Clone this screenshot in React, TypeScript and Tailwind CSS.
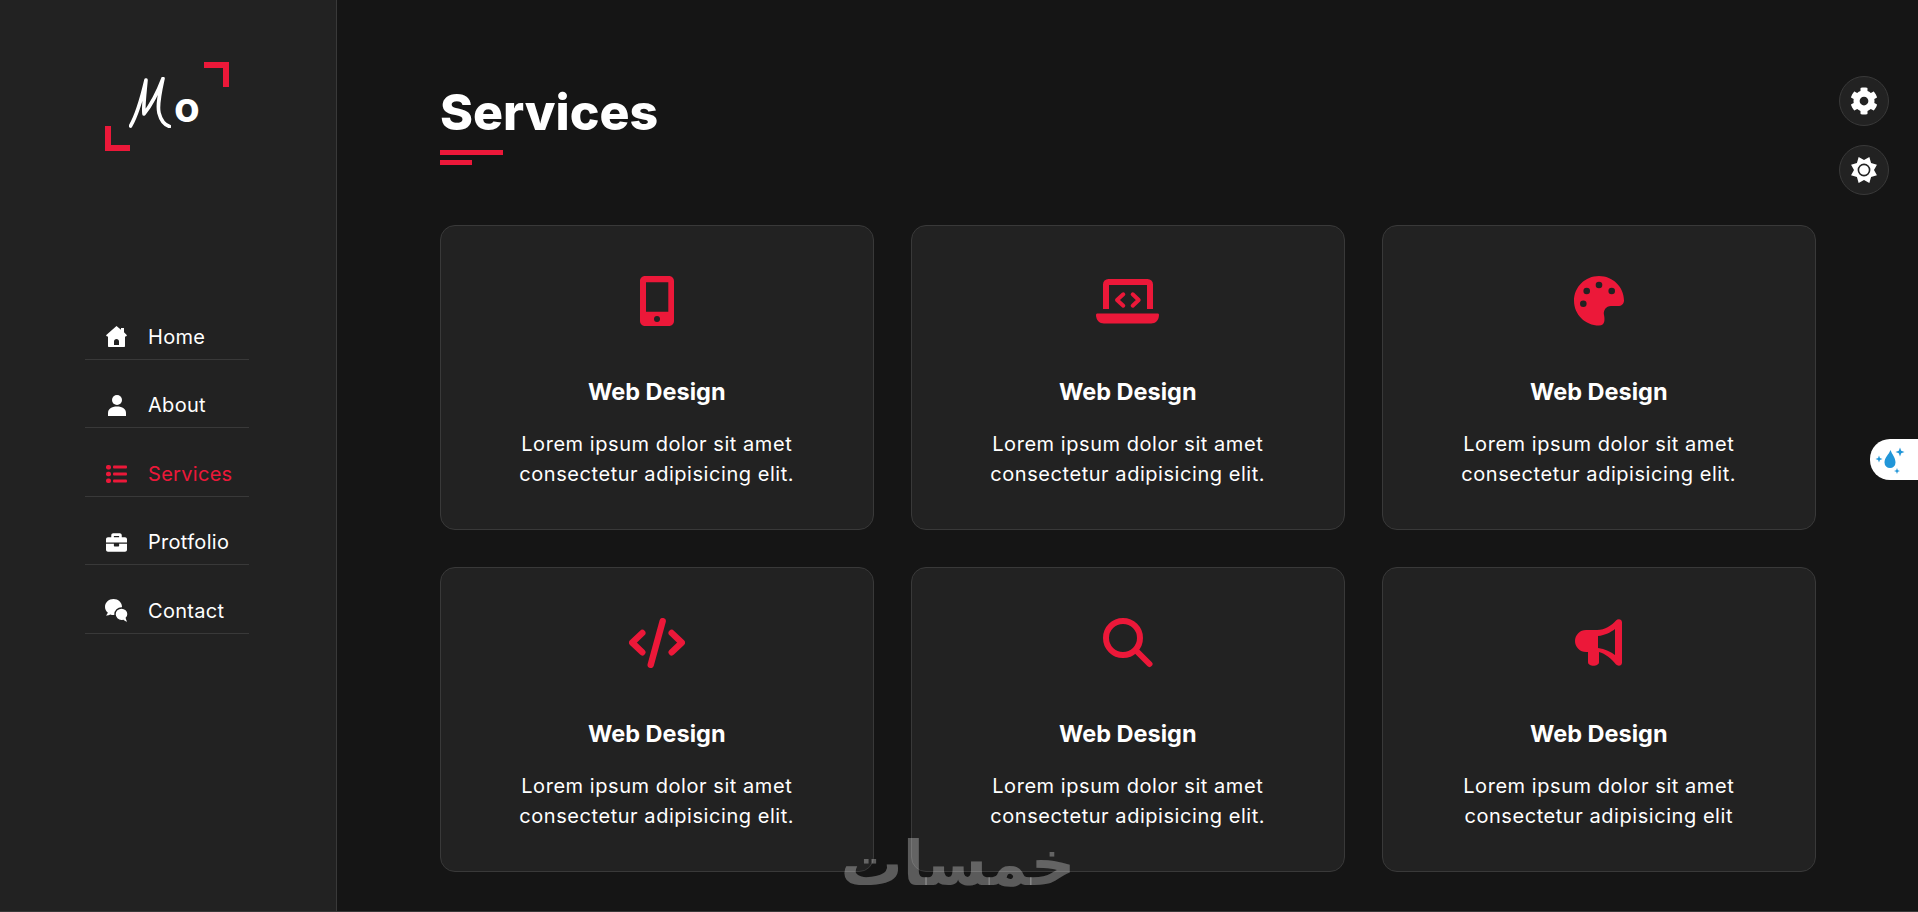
import { FaBriefcase, FaCog } from 'react-icons/fa';
import type { ReactNode } from 'react';

function HomeIcon() {
  return (
    <svg width="21" height="21" viewBox="0 0 21 21" fill="currentColor">
      <path
        fillRule="evenodd"
        d="M10.5 0L15 3.7V2H18V6.2L21 9.2L20 10.5H19V20C19 20.6 18.6 21 18 21H3C2.4 21 2 20.6 2 20V10.5H1L0 9.2ZM8 19H13V15.5C13 14 12 13 10.5 13C9 13 8 14 8 15.5Z"
      />
    </svg>
  );
}

function UserIcon() {
  return (
    <svg width="18" height="21" viewBox="0 0 18 21" fill="currentColor">
      <circle cx="9" cy="5" r="5" />
      <path d="M0 21V18C0 14 3.5 11.5 9 11.5C14.5 11.5 18 14 18 18V21Z" />
    </svg>
  );
}

function ListIcon() {
  return (
    <svg width="21" height="18" viewBox="0 0 21 18" fill="currentColor">
      <rect x="0" y="0" width="5" height="4.4" rx="2" />
      <rect x="0" y="6.8" width="5" height="4.4" rx="2" />
      <rect x="0" y="13.6" width="5" height="4.4" rx="2" />
      <rect x="7" y="0.6" width="14" height="3" rx="1" />
      <rect x="7" y="7.5" width="14" height="3" rx="1" />
      <rect x="7" y="14.4" width="14" height="3" rx="1" />
    </svg>
  );
}

function CommentsIcon() {
  return (
    <svg width="24" height="24" viewBox="0 0 24 24" fill="currentColor">
      <path d="M8.5 0C13.2 0 17 3.5 17 8C17 12.5 13.2 16 8.5 16C7.4 16 6.3 15.8 5.3 15.4C4 16.2 2.5 16.6 1 16.4C2 15.5 2.6 14.5 2.8 13.6C1 12.1 0 10.2 0 8C0 3.5 3.8 0 8.5 0Z" />
      <path
        d="M16.5 9C20 9 23 11.7 23 15C23 16.6 22.4 18 21.3 19C21.5 20.5 22.3 22 24 23.5C21.5 23.5 19.5 22.6 18.2 21.4C17.7 21.5 17.1 21.6 16.5 21.6C13 21.6 10 18.6 10 15.3C10 11.7 13 9 16.5 9Z"
        stroke="#222222"
        strokeWidth="1.4"
      />
    </svg>
  );
}

function PhoneIcon() {
  return (
    <svg width="34" height="50" viewBox="0 0 34 50" fill="currentColor">
      <path
        fillRule="evenodd"
        d="M5 0H29C31.8 0 34 2.2 34 5V45C34 47.8 31.8 50 29 50H5C2.2 50 0 47.8 0 45V5C0 2.2 2.2 0 5 0ZM6 6.3V35.7H28.3V6.3Z"
      />
      <circle cx="17" cy="43" r="3" fill="#222222" />
    </svg>
  );
}

function LaptopIcon() {
  return (
    <svg width="63" height="45" viewBox="0 0 63 45" fill="none" stroke="currentColor">
      <path d="M10 30V5.5C10 4 11 3 12.5 3H51.5C53 3 54 4 54 5.5V30" strokeWidth="6" />
      <path d="M27.3 15.3L21 21L27.3 26.7" strokeWidth="4" strokeLinecap="round" strokeLinejoin="round" />
      <path d="M36.7 15.3L42.7 21L36.7 26.7" strokeWidth="4" strokeLinecap="round" strokeLinejoin="round" />
      <path fill="currentColor" stroke="none" d="M1.5 34.5H61.5C62.5 34.5 63 35 63 36C63 41 59.5 44.5 55 44.5H8C3.5 44.5 0 41 0 36C0 35 0.5 34.5 1.5 34.5Z" />
    </svg>
  );
}

function CodeIcon() {
  return (
    <svg width="56" height="50" viewBox="0 0 56 50" fill="none" stroke="currentColor" strokeWidth="6.4" strokeLinecap="round" strokeLinejoin="round">
      <path d="M13.3 15L3.2 24.6L13.3 34.3" />
      <path d="M33.7 3.2L21.7 46.8" />
      <path d="M42.7 15L52.8 24.6L42.7 34.3" />
    </svg>
  );
}

function SearchIcon() {
  return (
    <svg width="50" height="50" viewBox="0 0 50 50" fill="none" stroke="currentColor" strokeWidth="6" strokeLinecap="round">
      <circle cx="20" cy="20" r="17" />
      <path d="M33 32.5L46.5 46" />
    </svg>
  );
}

function PaletteIcon() {
  return (
    <svg width="50" height="50" viewBox="0 0 50 50">
      <path
        fill="currentColor"
        d="M25 0C38.8 0 50 11 50 24.5C50 28 47.5 30 44 30H37C32 30 29 34.5 30 39C30.8 43 31.5 49.5 25 49.5C11.2 49.5 0 38.5 0 24.7C0 11 11.2 0 25 0Z"
      />
      <circle cx="12.7" cy="15" r="3.3" fill="#222222" />
      <circle cx="25" cy="9" r="3.3" fill="#222222" />
      <circle cx="37.7" cy="15" r="3.3" fill="#222222" />
      <circle cx="9.3" cy="27.7" r="3.3" fill="#222222" />
    </svg>
  );
}

function MegaphoneIcon() {
  return (
    <svg width="48" height="48" viewBox="0 0 48 48" fill="currentColor">
      <path
        fillRule="evenodd"
        d="M11 11H22C30 11 37 6 41 1.5C43 -0.5 47 0 47 3.5V43.5C47 47 43 47.5 41 45.5C37 40 30 34.5 24 33V43C24 48 13 48 13 43V33H11A11 11 0 0 1 11 11ZM23 17V29C30 30 36 33 40 36V10C36 13 30 16.5 23 17Z"
      />
    </svg>
  );
}

// eight pointed star with a ring cut out, the second round button
function StarGearIcon() {
  const points = Array.from({ length: 16 }, (_, i) => {
    const r = i % 2 === 0 ? 14 : 10;
    const a = ((i * 22.5 + 22.5) * Math.PI) / 180;
    return `${14 + r * Math.sin(a)},${14 - r * Math.cos(a)}`;
  }).join(' ');
  return (
    <svg width="28" height="28" viewBox="0 0 28 28">
      <polygon points={points} fill="white" strokeLinejoin="round" />
      <circle cx="14" cy="14" r="5.6" fill="white" stroke="#222222" strokeWidth="1.6" />
    </svg>
  );
}

const navItems = [
  { label: 'Home', icon: <HomeIcon /> },
  { label: 'About', icon: <UserIcon /> },
  { label: 'Services', icon: <ListIcon />, active: true },
  { label: 'Protfolio', icon: <FaBriefcase className="text-[21px]" /> },
  { label: 'Contact', icon: <CommentsIcon /> },
];

const services: { icon: ReactNode; last?: boolean }[] = [
  { icon: <PhoneIcon /> },
  { icon: <LaptopIcon /> },
  { icon: <PaletteIcon /> },
  { icon: <CodeIcon /> },
  { icon: <SearchIcon /> },
  { icon: <MegaphoneIcon />, last: true },
];

function Logo() {
  return (
    <div className="relative w-[124px] h-[89px] ml-[105px]">
      <span className="absolute right-0 top-0 w-[25px] h-[25px] border-t-[6px] border-r-[6px] border-[#ec1839]" />
      <span className="absolute left-0 bottom-0 w-[25px] h-[25px] border-b-[6px] border-l-[6px] border-[#ec1839]" />
      <div className="absolute left-[24px] top-[15px] flex items-end text-white">
        <svg width="42" height="51" viewBox="0 0 42 51" fill="none" stroke="white" strokeLinecap="round" strokeLinejoin="round">
          <path d="M1.5 49C8 38 13 20 17 3C16 15 14 30 15 37C22 28 30 12 34 1.5C31 15 28 28 30 36C32 44 36 48 40.5 49.5" strokeWidth="3.6" />
        </svg>
        <span className="ml-[3px] mb-[0px] text-[42px] leading-[42px] font-bold">o</span>
      </div>
    </div>
  );
}

function CircleButton({ children }: { children: ReactNode }) {
  return (
    <div className="w-[50px] h-[50px] rounded-full bg-[#222222] border border-[#393939] flex items-center justify-center text-white text-[28px]">
      {children}
    </div>
  );
}

export default function App() {
  return (
    <div className="h-[912px] flex bg-[#151515] text-white overflow-hidden relative border-b border-[#393939] font-['Inter','Open_Sans',sans-serif]">
      <aside className="w-[337px] shrink-0 bg-[#222222] border-r border-[#393939] pt-[62px]">
        <Logo />
        <nav className="mt-[140px] ml-[85px] w-[164px]">
          {navItems.map((item) => (
            <div
              key={item.label}
              className={`flex items-end h-[68.5px] pb-[8px] border-b border-[#393939] ${item.active ? 'text-[#ec1839]' : 'text-white'}`}
            >
              <span className="w-[63px] h-[28px] flex items-center justify-center">{item.icon}</span>
              <span className="text-[20px] leading-[28px] tracking-[0.3px]">{item.label}</span>
            </div>
          ))}
        </nav>
      </aside>

      <main className="flex-1 pl-[103px] pt-[78px]">
        <h1 className="text-[50px] leading-[68px] font-extrabold">Services</h1>
        <div className="mt-[4px] w-[63px] h-[5px] bg-[#ec1839]" />
        <div className="mt-[5px] w-[32px] h-[5px] bg-[#ec1839]" />

        <div className="mt-[60px] w-[1375.5px] grid grid-cols-3 gap-x-[37.5px] gap-y-[37px]">
          {services.map((s, i) => (
            <div
              key={i}
              className="h-[305px] bg-[#222222] border border-[#393939] rounded-[15px] flex flex-col items-center pt-[50px] text-center"
            >
              <div className="h-[50px] flex items-center justify-center text-[#ec1839]">{s.icon}</div>
              <h3 className="mt-[49px] text-[23.5px] leading-[33px] font-bold">Web Design</h3>
              <p className="mt-[21px] text-[20px] leading-[30px] tracking-[0.55px]">
                Lorem ipsum dolor sit amet
                <br />
                consectetur adipisicing elit{s.last ? '' : '.'}
              </p>
            </div>
          ))}
        </div>
      </main>

      <div className="absolute right-[29px] top-[76px] flex flex-col gap-[19px]">
        <CircleButton>
          <FaCog />
        </CircleButton>
        <CircleButton>
          <StarGearIcon />
        </CircleButton>
      </div>

      <div className="absolute right-0 top-[439px] w-[48px] h-[41px] bg-white rounded-l-[20px] flex items-center justify-center pr-[8px] pt-[3px]">
        <svg width="32" height="32" viewBox="0 0 32 32" fill="#2196d8">
          <path d="M16.5 5C18 9.5 21.5 12.5 21.5 17.5A5.5 5.5 0 0 1 10.5 17.5C10.5 12.5 15 9.5 16.5 5Z" />
          <path d="M26 2.5L27.2 5.8L30.5 7L27.2 8.2L26 11.5L24.8 8.2L21.5 7L24.8 5.8Z" />
          <path d="M5 10.5L5.9 13.1L8.5 14L5.9 14.9L5 17.5L4.1 14.9L1.5 14L4.1 13.1Z" />
          <path d="M23 23L23.8 25.2L26 26L23.8 26.8L23 29L22.2 26.8L20 26L22.2 25.2Z" />
        </svg>
      </div>

      <div
        dir="rtl"
        className="absolute left-[743px] top-[824px] w-[430px] text-center text-[62px] leading-[80px] font-bold text-white/30 font-['DejaVu_Sans',sans-serif]"
      >
        خمسات
      </div>
    </div>
  );
}
